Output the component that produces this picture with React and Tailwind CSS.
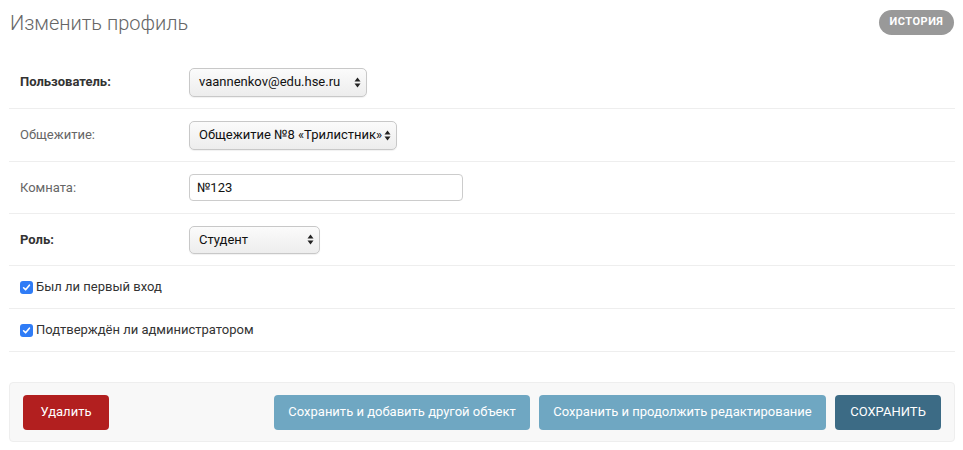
import React from 'react'

const roboto = { fontFamily: 'Roboto, "Liberation Sans", sans-serif' }

function Arrows() {
  return (
    <svg width="7" height="11" viewBox="0 0 7 11" className="shrink-0">
      <path d="M3.5 0.5 L6.5 4.5 L0.5 4.5 Z" fill="#222" />
      <path d="M3.5 10.5 L6.5 6.5 L0.5 6.5 Z" fill="#222" />
    </svg>
  )
}

function FakeSelect({ value, width, height = 29 }) {
  return (
    <div
      className="flex items-center justify-between rounded-[5px] border border-[#c8c8c8] bg-gradient-to-b from-[#fbfbfb] to-[#ededed] pl-[9px] pr-[5px] text-[13px] text-[#111] shadow-[0_1px_1px_rgba(0,0,0,0.06)]"
      style={{ width, height }}
    >
      <span className="whitespace-nowrap">{value}</span>
      <Arrows />
    </div>
  )
}

function Check() {
  return (
    <span className="flex h-[13px] w-[13px] items-center justify-center rounded-[3px] bg-[#2f7cf6]">
      <svg width="9" height="9" viewBox="0 0 9 9">
        <path d="M1.6 4.8 L3.6 6.8 L7.4 2.2" fill="none" stroke="#fff" strokeWidth="1.6" strokeLinecap="round" strokeLinejoin="round" />
      </svg>
    </span>
  )
}

function Row({ label, bold, h = 'h-[52px]', children }) {
  return (
    <div className={`flex ${h} items-center border-b border-[#eee] px-[11px]`}>
      <div className={`w-[169px] text-[13px] ${bold ? 'font-bold text-[#333]' : 'text-[#666]'}`}>{label}</div>
      {children}
    </div>
  )
}

function CheckRow({ label }) {
  return (
    <div className="flex h-[43px] items-center gap-[3px] border-b border-[#eee] px-[11px] text-[13px] text-[#333]">
      <Check />
      <span>{label}</span>
    </div>
  )
}

export default function App() {
  return (
    <div className="min-h-screen bg-white pl-[9px] pr-[8px]" style={roboto}>
      <div className="flex h-[56px] items-start justify-between">
        <h1 className="pt-[11px] pl-[1px] text-[20px] leading-[24px] font-light text-[#666]">Изменить профиль</h1>
        <a className="mt-[10px] mr-[1px] flex h-[25px] w-[75px] items-center justify-center rounded-full bg-[#999] text-[11px] font-bold tracking-[0.5px] text-white">
          ИСТОРИЯ
        </a>
      </div>

      <div>
        <Row label="Пользователь:" bold h="h-[53px]">
          <FakeSelect value="vaannenkov@edu.hse.ru" width={178} />
        </Row>
        <Row label="Общежитие:" h="h-[53px]">
          <FakeSelect value="Общежитие №8 «Трилистник»" width={208} />
        </Row>
        <Row label="Комната:">
          <div className="flex h-[27px] w-[274px] items-center rounded-[4px] border border-[#ccc] px-[7px] text-[13px] text-[#111]">
            №123
          </div>
        </Row>
        <Row label="Роль:" bold>
          <FakeSelect value="Студент" width={131} height={28} />
        </Row>
        <CheckRow label="Был ли первый вход" />
        <CheckRow label="Подтверждён ли администратором" />
      </div>

      <div className="mt-[30px] flex h-[60px] items-center rounded-[4px] border border-[#eee] bg-[#f8f8f8] px-[13px]">
        <a className="flex h-[35px] w-[86px] items-center justify-center rounded-[4px] bg-[#b21f1f] text-[13px] text-white">
          Удалить
        </a>
        <div className="ml-auto flex gap-[9px]">
          <a className="flex h-[35px] w-[256px] items-center justify-center rounded-[4px] bg-[#6fa7c2] text-[13px] text-white">
            Сохранить и добавить другой объект
          </a>
          <a className="flex h-[35px] w-[287px] items-center justify-center rounded-[4px] bg-[#6fa7c2] text-[13px] text-white">
            Сохранить и продолжить редактирование
          </a>
          <a className="flex h-[35px] w-[106px] items-center justify-center rounded-[4px] bg-[#3c6b85] text-[13px] text-white">
            СОХРАНИТЬ
          </a>
        </div>
      </div>
    </div>
  )
}
